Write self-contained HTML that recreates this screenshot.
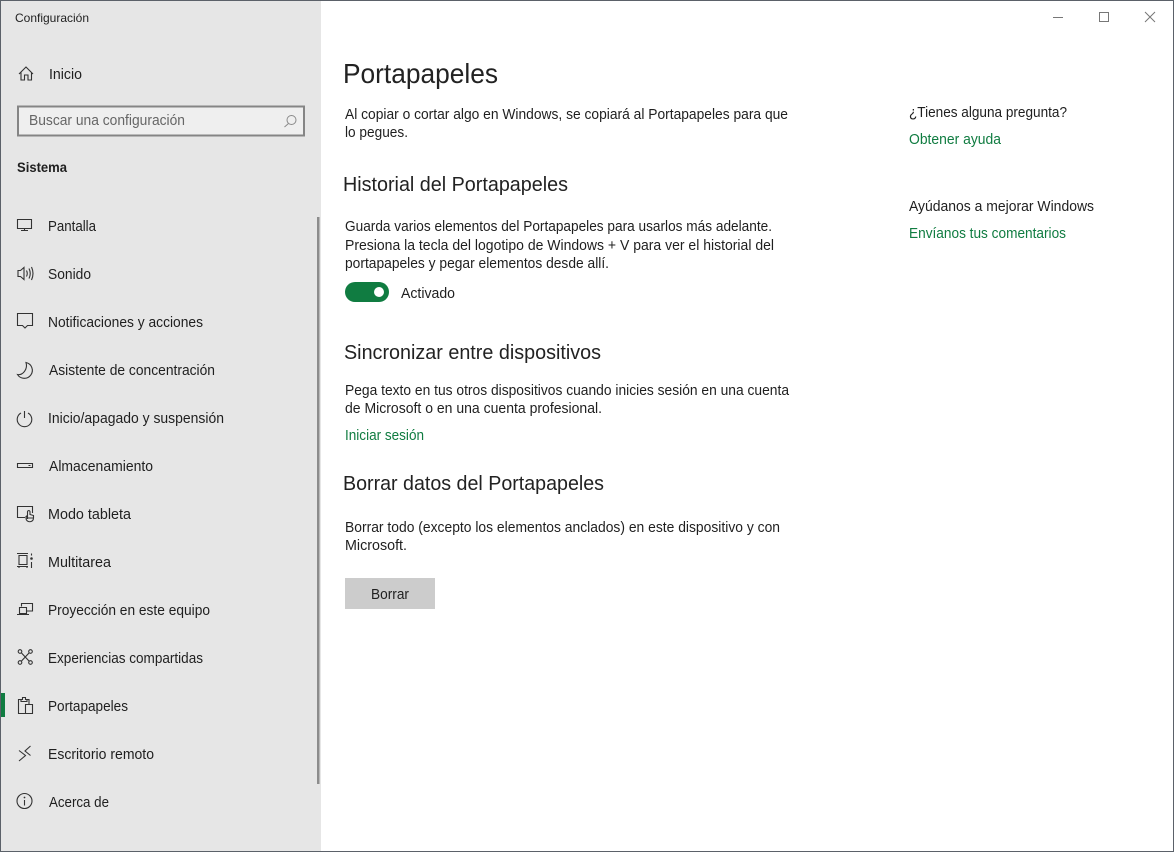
<!DOCTYPE html>
<html lang="es"><head><meta charset="utf-8"><title>Configuración</title>
<style>
html,body{margin:0;padding:0;background:#fff;width:1174px;height:852px;overflow:hidden}
svg{display:block}
text{font-family:"Liberation Sans",sans-serif;font-size:14.5px;fill:#1f1f1f}
.g{fill:#107c41}
.h{font-size:20px;fill:#222}
.i{fill:none;stroke:#333;stroke-width:1.1}
</style></head><body>
<svg width="1174" height="852" viewBox="0 0 1174 852" xmlns="http://www.w3.org/2000/svg">
<rect width="1174" height="852" fill="#fff"/>
<rect x="1" y="1" width="320" height="850" fill="#e6e6e6"/>
<rect x="0.5" y="0.5" width="1173" height="851" fill="none" stroke="#5b6169"/>
<rect x="317" y="217" width="2.5" height="567" fill="#8c8c8c"/>
<rect x="1" y="693" width="4" height="24" fill="#107c41"/>

<text x="15" y="22" style="font-size:12px" textLength="74" lengthAdjust="spacingAndGlyphs">Configuración</text>
<text x="49" y="79" textLength="33" lengthAdjust="spacingAndGlyphs">Inicio</text>
<rect x="18" y="106.500" width="286" height="29" fill="#efefef" stroke="#858585" stroke-width="2"/>
<text x="29" y="125" style="fill:#666" textLength="156" lengthAdjust="spacingAndGlyphs">Buscar una configuración</text>
<text x="17" y="172" font-weight="700" textLength="50" lengthAdjust="spacingAndGlyphs" style="font-size:13.500px">Sistema</text>

<text x="48" y="231" textLength="48" lengthAdjust="spacingAndGlyphs">Pantalla</text>
<text x="48" y="279" textLength="43" lengthAdjust="spacingAndGlyphs">Sonido</text>
<text x="48" y="327" textLength="155" lengthAdjust="spacingAndGlyphs">Notificaciones y acciones</text>
<text x="49" y="375" textLength="166" lengthAdjust="spacingAndGlyphs">Asistente de concentración</text>
<text x="48" y="423" textLength="176" lengthAdjust="spacingAndGlyphs">Inicio/apagado y suspensión</text>
<text x="49" y="471" textLength="104" lengthAdjust="spacingAndGlyphs">Almacenamiento</text>
<text x="48" y="519" textLength="83" lengthAdjust="spacingAndGlyphs">Modo tableta</text>
<text x="48" y="567" textLength="63" lengthAdjust="spacingAndGlyphs">Multitarea</text>
<text x="48" y="615" textLength="162" lengthAdjust="spacingAndGlyphs">Proyección en este equipo</text>
<text x="48" y="663" textLength="155" lengthAdjust="spacingAndGlyphs">Experiencias compartidas</text>
<text x="48" y="711" textLength="80" lengthAdjust="spacingAndGlyphs">Portapapeles</text>
<text x="48" y="759" textLength="106" lengthAdjust="spacingAndGlyphs">Escritorio remoto</text>
<text x="49" y="807" textLength="60" lengthAdjust="spacingAndGlyphs">Acerca de</text>

<!-- icons -->
<path class="i" d="M19 74L26 67L33 74M21 72.500V80H24.500V75H28V80H31.500V72.500"/>
<circle class="i" cx="291.500" cy="120" r="4.500" style="stroke:#8a8a8a;stroke-width:1"/><path class="i" style="stroke:#8a8a8a;stroke-width:1" d="M288.500 123.500L284.500 127"/>
<path class="i" d="M17.500 219.500H31.500V228.500H17.500ZM24.500 228.500V230.500M21 230.500H28"/>
<path class="i" d="M18 270.500V276.500H20.500L24 279.500V267.500L20.500 270.500ZM26.500 270.500Q28 273.500 26.500 276.500M29 268.500Q31.500 273.500 29 278.500M31.500 267Q34.500 273.500 31.500 280"/>
<path class="i" d="M17.500 313.500H32.500V325.500H27.500L25 328L22.500 325.500H17.500Z"/>
<path class="i" d="M26 362.500A8 8 0 1 1 17.500 374.500C23 375.500 28 369 26 362.500Z"/>
<path class="i" d="M21 413A7.300 7.300 0 1 0 28 413M24.500 411V418"/>
<path class="i" d="M17.500 463.500H32.500V467.500H17.500ZM28.500 465.500H30.500"/>
<path class="i" d="M25 517.500H17.500V506.500H32.500V513M27.500 519V511.500A1.300 1.300 0 0 1 30 511.500V514.500L33.500 515.500V518C33.500 523 26 523 26 518V516.500L27.500 515.500M26 518H33.500"/>
<path class="i" d="M17 553.500H28M19 555.500H27V564.500H19ZM17 566.500H28M19 566.500V568M27 566.500V568M31.500 553.500V555.500M31.500 562V568"/><circle cx="31.500" cy="558.500" r="1.300" fill="#333"/>
<path class="i" d="M21.500 606.500V603.500H32.500V611H27M19.500 607.500H26.500V613.500H19.500ZM17 614.500H29"/>
<circle class="i" cx="20" cy="651.500" r="1.800"/><circle class="i" cx="30.500" cy="651.500" r="1.800"/><circle class="i" cx="20" cy="662.500" r="1.800"/><circle class="i" cx="30.500" cy="662.500" r="1.800"/><path class="i" d="M21.500 653L29 661M29 653L21.500 661"/>
<path class="i" d="M21 699.500H18.500V713.500H25M27 699.500H29V704M25.500 704.500H32.500V713.500H25.500ZM21 701.500H27V699.500H25.500V697.500H22.500V699.500H21Z"/>
<path class="i" d="M19 750.500L25.500 755.500L19 761M30.500 746L25 751L30.500 755.500"/>
<circle class="i" cx="24.500" cy="801" r="7.500"/><path class="i" d="M24.500 800V805.500"/><circle cx="24.500" cy="797.500" r="0.900" fill="#333"/>

<!-- window controls -->
<path d="M1053 17.500H1063" stroke="#777" fill="none"/>
<rect x="1099.500" y="12.500" width="9" height="9" fill="none" stroke="#777"/>
<path d="M1145 12L1155 22M1155 12L1145 22" stroke="#777" fill="none"/>

<!-- main -->
<text x="343" y="83" style="font-size:28px;fill:#222" textLength="155" lengthAdjust="spacingAndGlyphs">Portapapeles</text>
<text x="345" y="119" textLength="443" lengthAdjust="spacingAndGlyphs">Al copiar o cortar algo en Windows, se copiará al Portapapeles para que</text>
<text x="345" y="137" textLength="63" lengthAdjust="spacingAndGlyphs">lo pegues.</text>
<text class="h" x="343" y="191" textLength="225" lengthAdjust="spacingAndGlyphs">Historial del Portapapeles</text>
<text x="345" y="231" textLength="427" lengthAdjust="spacingAndGlyphs">Guarda varios elementos del Portapapeles para usarlos más adelante.</text>
<text x="345" y="250" textLength="429" lengthAdjust="spacingAndGlyphs">Presiona la tecla del logotipo de Windows + V para ver el historial del</text>
<text x="345" y="268" textLength="264" lengthAdjust="spacingAndGlyphs">portapapeles y pegar elementos desde allí.</text>
<rect x="345" y="282" width="44" height="20" rx="10" fill="#107c41"/>
<circle cx="379" cy="292" r="5" fill="#fff"/>
<text x="401" y="298" textLength="54" lengthAdjust="spacingAndGlyphs">Activado</text>
<text class="h" x="344" y="359" textLength="257" lengthAdjust="spacingAndGlyphs">Sincronizar entre dispositivos</text>
<text x="345" y="395" textLength="444" lengthAdjust="spacingAndGlyphs">Pega texto en tus otros dispositivos cuando inicies sesión en una cuenta</text>
<text x="345" y="413" textLength="257" lengthAdjust="spacingAndGlyphs">de Microsoft o en una cuenta profesional.</text>
<text class="g" x="345" y="440" textLength="79" lengthAdjust="spacingAndGlyphs">Iniciar sesión</text>
<text class="h" x="343" y="490" textLength="261" lengthAdjust="spacingAndGlyphs">Borrar datos del Portapapeles</text>
<text x="345" y="532" textLength="435" lengthAdjust="spacingAndGlyphs">Borrar todo (excepto los elementos anclados) en este dispositivo y con</text>
<text x="345" y="550" textLength="62" lengthAdjust="spacingAndGlyphs">Microsoft.</text>
<rect x="345" y="578" width="90" height="31" fill="#cccccc"/>
<text x="371" y="599" textLength="38" lengthAdjust="spacingAndGlyphs">Borrar</text>

<text x="909" y="117" textLength="158" lengthAdjust="spacingAndGlyphs">¿Tienes alguna pregunta?</text>
<text class="g" x="909" y="144" textLength="92" lengthAdjust="spacingAndGlyphs">Obtener ayuda</text>
<text x="909" y="211" textLength="185" lengthAdjust="spacingAndGlyphs">Ayúdanos a mejorar Windows</text>
<text class="g" x="909" y="238" textLength="157" lengthAdjust="spacingAndGlyphs">Envíanos tus comentarios</text>
</svg>
</body></html>
